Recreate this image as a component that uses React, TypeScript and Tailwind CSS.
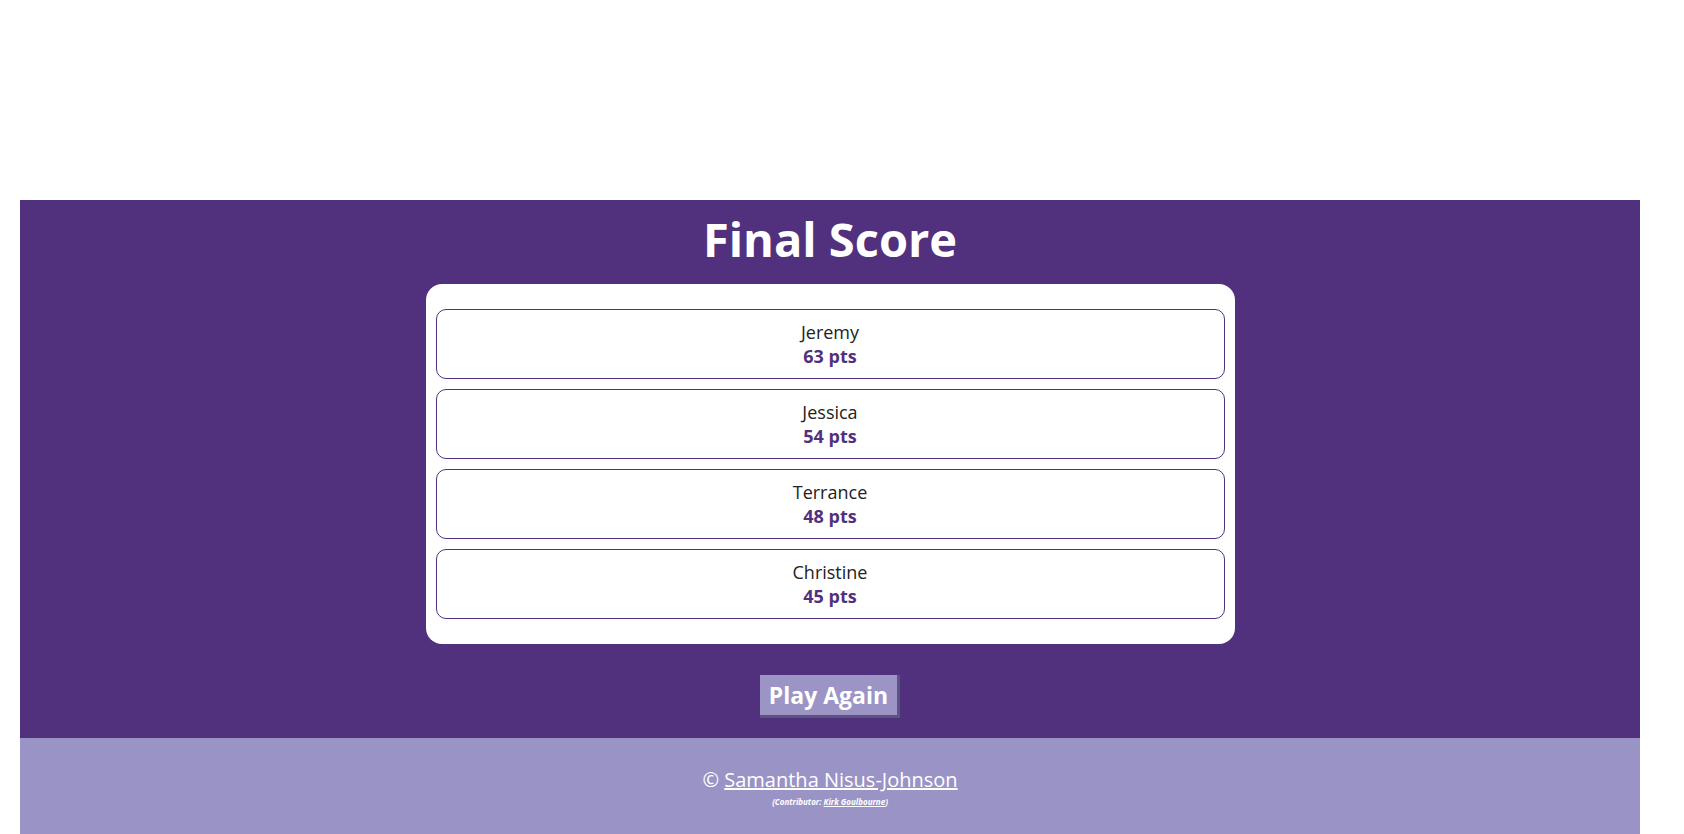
import React from 'react';

const players = [
  { name: 'Jeremy', score: 63 },
  { name: 'Jessica', score: 54 },
  { name: 'Terrance', score: 48 },
  { name: 'Christine', score: 45 },
];

function ScoreRow({ name, score }: { name: string; score: number }) {
  return (
    <li className="h-[70px] border border-[#51317e] rounded-[10px] flex flex-col items-center justify-center">
      <span className="text-[18px] leading-[24px] font-medium text-[#222222]">{name}</span>
      <span className="text-[18px] leading-[24px] font-bold text-[#51317e]">{score} pts</span>
    </li>
  );
}

function Footer() {
  return (
    <footer className="bg-[#9a93c6] h-[100px] pt-[28px] flex flex-col items-center text-white">
      <p className="text-[20px] leading-[28px] font-medium">
        © <a href="#" className="underline">Samantha Nisus-Johnson</a>
      </p>
      <p className="mt-[2px] text-[8px] leading-[12px] italic font-bold">
        (Contributor: <a href="#" className="underline">Kirk Goulbourne</a>)
      </p>
    </footer>
  );
}

export default function App() {
  return (
    <div className="min-h-screen bg-white pt-[200px] font-['Open_Sans',sans-serif]">
      <div className="ml-[20px] w-[1620px]">
        <main className="bg-[#51317e] h-[538px] flex flex-col items-center">
          <h1 className="pt-[7px] text-[47px] leading-[64px] font-bold text-white">Final Score</h1>

          {/* score card */}
          <ul className="mt-[13px] w-[809px] bg-white rounded-[16px] px-[10px] py-[25px] flex flex-col gap-[10px]">
            {players.map((p) => (
              <ScoreRow key={p.name} name={p.name} score={p.score} />
            ))}
          </ul>

          <button className="mt-[31px] h-[43px] px-[9px] bg-[#9b94c5] border-r-[3px] border-b-[3px] border-[#5b5380] text-white text-[23px] font-bold leading-[32px]">
            Play Again
          </button>
        </main>
        <Footer />
      </div>
    </div>
  );
}
